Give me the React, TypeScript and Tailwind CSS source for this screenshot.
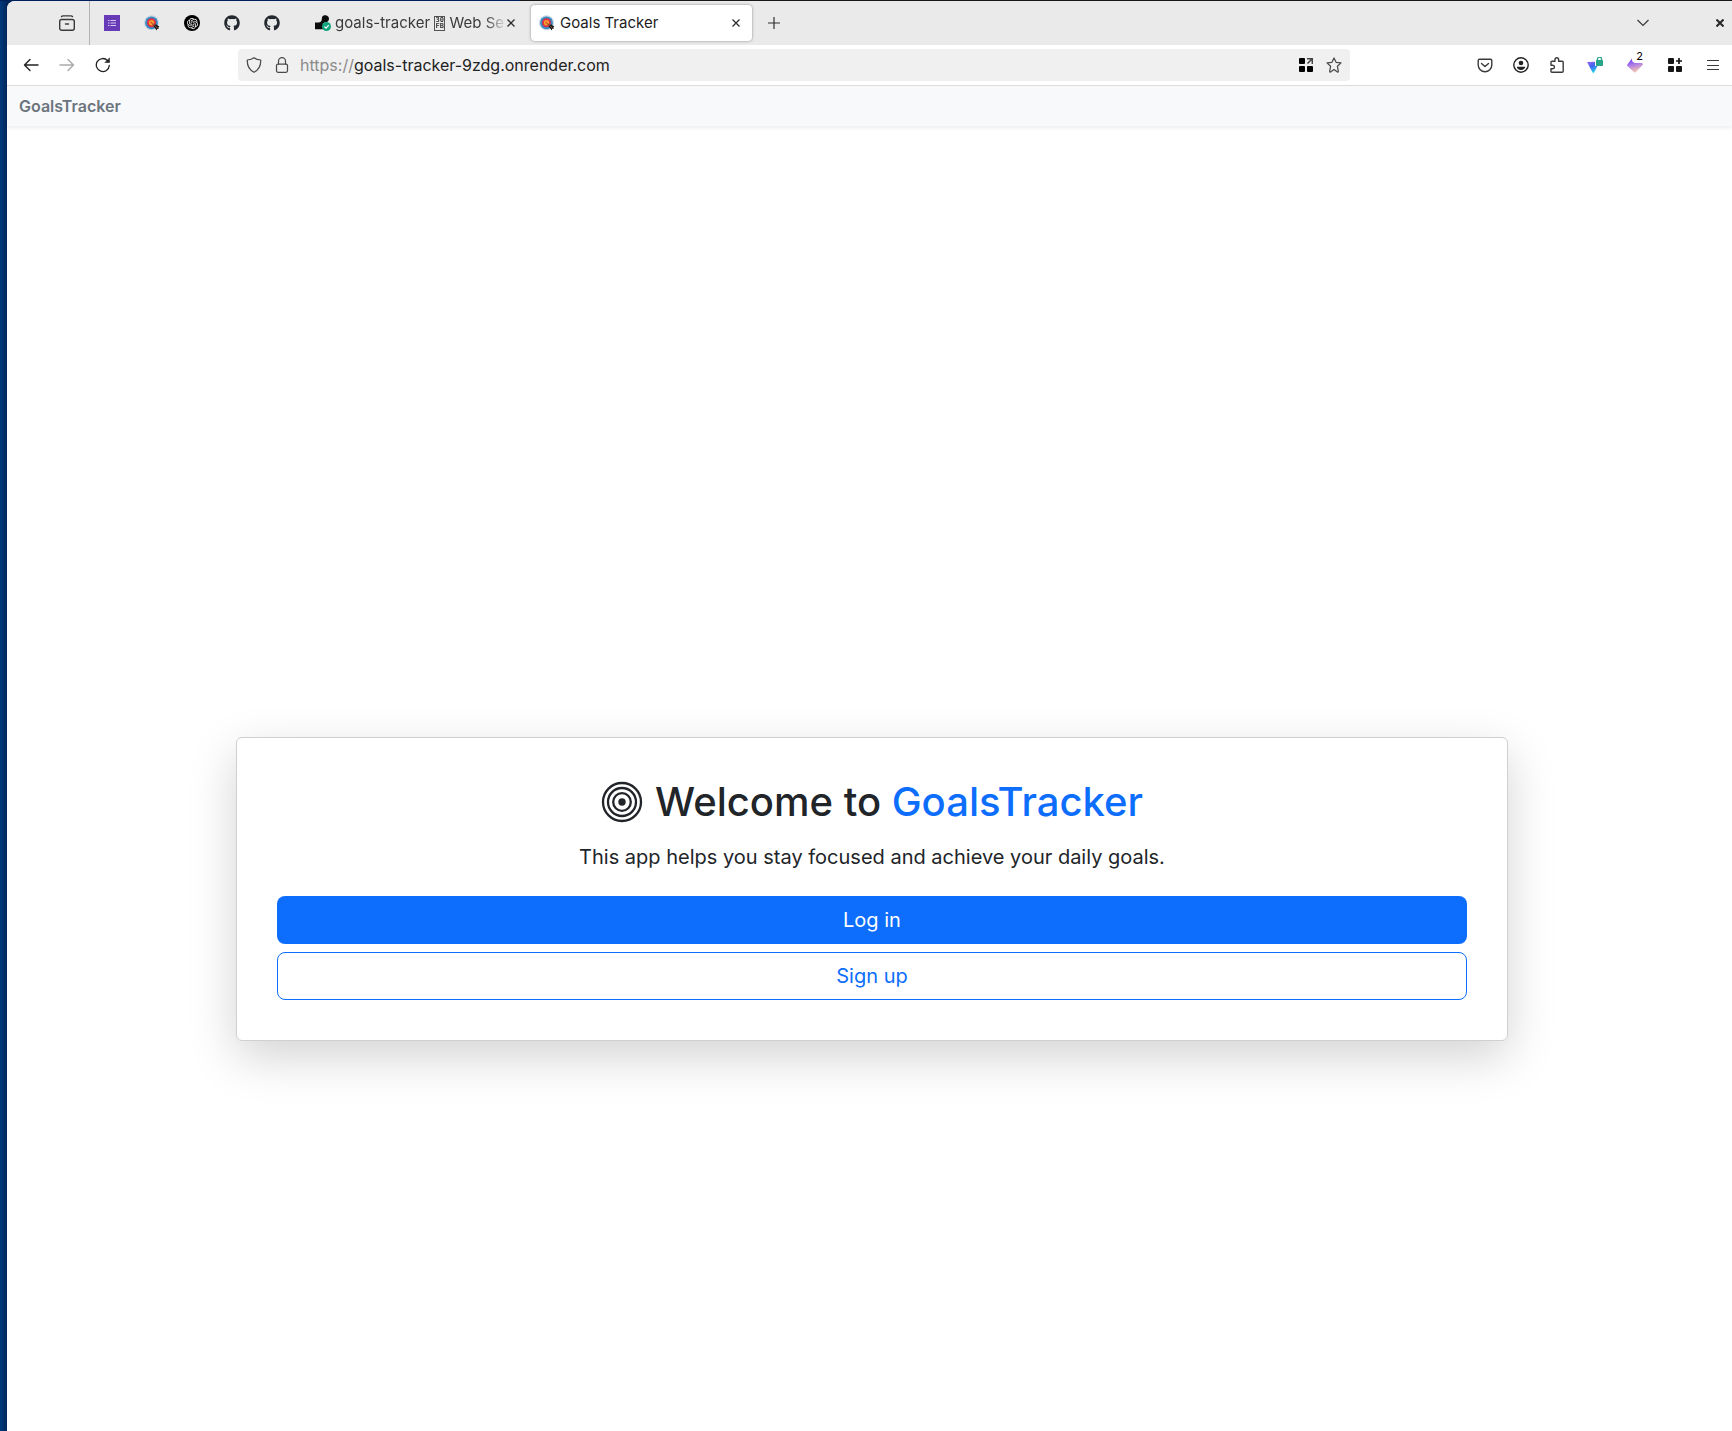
import React from "react";
import { SiOpenai } from "react-icons/si";
import { FaGithub } from "react-icons/fa";

function Stroke({ children, className = "text-[#3a3a3a]", size = 16 }: { children: React.ReactNode; className?: string; size?: number }) {
  return (
    <svg aria-hidden="true" width={size} height={size} viewBox="0 0 16 16" fill="none" stroke="currentColor" strokeWidth="1.25" strokeLinecap="round" strokeLinejoin="round" className={`shrink-0 ${className}`}>
      {children}
    </svg>
  );
}

function TargetFavicon() {
  return (
    <svg aria-hidden="true" width="16" height="16" viewBox="0 0 16 16" className="shrink-0">
      <circle cx="7.5" cy="7.8" r="7.5" fill="#c5d8e3" />
      <circle cx="7.5" cy="7.8" r="6.4" fill="#3b88c3" />
      <circle cx="7.5" cy="7.8" r="4.5" fill="#dd2e44" />
      <circle cx="7.5" cy="7.8" r="2.7" fill="#f9a12e" />
      <circle cx="7.3" cy="7.6" r="1.1" fill="#e4572e" />
      <path d="M8.3 8.6 11 11" stroke="#8a4b2c" strokeWidth="1.4" />
      <path d="M9.6 11.2 12 9.2l3.4 2.6-1.2 1 .6 1.2-1.6-.2-.4 1.8z" fill="#141414" />
      <path d="m11 10.6 2.6 2.8" stroke="#d98a5a" strokeWidth="0.7" />
    </svg>
  );
}

function PinnedTab({ label, children }: { label: string; children: React.ReactNode }) {
  return (
    <button type="button" aria-label={label} className="flex h-9 w-10 items-center justify-center">
      {children}
    </button>
  );
}

function IconButton({ label, width = "w-9", children }: { label: string; width?: string; children: React.ReactNode }) {
  return (
    <button type="button" aria-label={label} className={`relative flex h-8 shrink-0 items-center justify-center ${width}`}>
      {children}
    </button>
  );
}

function CloseIcon() {
  return (
    <svg aria-hidden="true" width="8" height="8" viewBox="0 0 8 8" fill="none" stroke="#2e2e2e" strokeWidth="1.3" className="shrink-0">
      <path d="m.5.5 7 7m0-7-7 7" />
    </svg>
  );
}

function TabStrip() {
  return (
    <div className="flex h-11 items-center bg-[#eaeaea] text-[15px] text-[#3a3a3a]">
      <button type="button" aria-label="Recent browsing" className="flex h-full w-[83px] items-center justify-end border-r border-[#b4b4b4] pr-[14px]">
        <Stroke>
          <path d="M2.5 1.6C2.9 1 3.300.9 4 .9h8c.7 0 1.100.1 1.500.7" strokeWidth="1.400" />
          <rect x=".7" y="4.500" width="14.600" height="10.800" rx="2" strokeWidth="1.400" />
          <path d="M6.500 9h3" strokeWidth="1.400" />
        </Stroke>
      </button>
      <nav aria-label="Pinned tabs" className="ml-0.5 flex">
        <PinnedTab label="Forms">
          <svg aria-hidden="true" width="16" height="16" viewBox="0 0 16 16">
            <path fill="#673ab7" d="M0 0h16v16H0z" />
            <path d="M4 5.500h1.500M4 8h1.500M4 10.500h1.500M6.500 5.500H12M6.500 8H12M6.500 10.500H12" stroke="#d6c8ee" strokeWidth="1" />
          </svg>
        </PinnedTab>
        <PinnedTab label="Goals Tracker"><TargetFavicon /></PinnedTab>
        <PinnedTab label="ChatGPT">
          <span className="flex size-4 items-center justify-center rounded-full bg-black text-white"><SiOpenai size={11} /></span>
        </PinnedTab>
        <PinnedTab label="GitHub"><FaGithub size={16} color="#24292f" /></PinnedTab>
        <PinnedTab label="GitHub repository"><FaGithub size={16} color="#24292f" /></PinnedTab>
      </nav>
      <div className="ml-3.5 flex h-9 w-[221px] items-center pl-[9px]">
        <svg aria-hidden="true" width="16" height="16" viewBox="0 0 16 16" className="shrink-0">
          <path d="M7.500 1.200C8.200.300 9.500 0 10.800.300c2 .300 3.200 1.700 3.200 3.500 0 2.200-1.700 3.800-4 3.800-1 0-1.800.700-1.800 1.600v5H0V7.500h3.500c2.200 0 3.200-1.500 3.300-3.300.100-1.200.200-2.300.700-3z" fill="#0d0d0d" />
          <circle cx="11.500" cy="11.500" r="4.500" fill="#12a67f" />
          <path d="m9.500 11.700 1.500 1.500 2.700-3" fill="none" stroke="#fff" strokeWidth="1.200" />
        </svg>
        <span className="ml-1 flex h-6 w-[172px] shrink-0 items-center whitespace-pre [mask-image:linear-gradient(to_left,transparent,black_22px)]">
          <span>goals-tracker </span>
          <span className="flex h-[15px] w-[11px] shrink-0 flex-col items-center justify-center border border-[#555] font-['DejaVu_Sans_Mono',monospace] text-[7px] leading-[6px] font-bold">
            <span>30</span>
            <span>FB</span>
          </span>
          <span> Web Se</span>
        </span>
        <button type="button" aria-label="Close goals-tracker tab"><CloseIcon /></button>
      </div>
      <div className="ml-1 flex h-9 w-[221px] items-center rounded bg-white pr-3 pl-2 text-[#1c1c1e] shadow-[0_0_3px_rgba(0,0,0,0.4)]">
        <TargetFavicon />
        <span className="ml-[5px] flex-1 whitespace-nowrap">Goals Tracker</span>
        <button type="button" aria-label="Close Goals Tracker tab"><CloseIcon /></button>
      </div>
      <button type="button" aria-label="New tab" className="ml-4 size-3">
        <svg aria-hidden="true" width="12" height="12" viewBox="0 0 12 12" stroke="#2e2e2e" strokeWidth="1.200"><path d="M6 0v12M0 6h12" /></svg>
      </button>
      <button type="button" aria-label="List all tabs" className="ml-auto">
        <svg aria-hidden="true" width="12" height="8" viewBox="0 0 12 8" fill="none" stroke="#3a3a3a" strokeWidth="1.200"><path d="m.500 1 5.500 5.500L11.500 1" /></svg>
      </button>
      <button type="button" aria-label="Close window" className="mr-2 ml-[67px]">
        <svg aria-hidden="true" width="8" height="8" viewBox="0 0 8 8" stroke="#252525" strokeWidth="2"><path d="m.500.500 7 7m0-7-7 7" /></svg>
      </button>
    </div>
  );
}

function Toolbar() {
  return (
    <div className="flex h-[41px] items-center border-b border-[#dcdee0] bg-white">
      <div className="flex w-[231px] shrink-0 pl-1.5">
        <IconButton label="Back"><Stroke className="text-[#222]"><path d="M15 8H1.500M7 2.500 1.500 8 7 13.500" strokeWidth="1.400" /></Stroke></IconButton>
        <IconButton label="Forward"><Stroke className="text-[#aaa]"><path d="M1 8h13.500M9 2.500 14.500 8 9 13.500" strokeWidth="1.400" /></Stroke></IconButton>
        <IconButton label="Reload">
          <Stroke className="text-[#222]">
            <path d="M14.300 8.500A6.500 6.500 0 1 1 12.600 3.600" strokeWidth="1.300" />
            <path d="M14.500 1.200v4.300h-4.300z" fill="currentColor" strokeWidth=".6" />
          </Stroke>
        </IconButton>
      </div>
      <div className="flex h-8 min-w-0 flex-1 items-center rounded bg-[#f0f0f0] pr-2 pl-2 text-base">
        <Stroke className="text-[#4a4a4a]"><path d="M8 .7C6 2.200 4 2.700 1.300 3c-.3 5.500 1.500 9.600 6.700 12.300C13.200 12.600 15 8.500 14.700 3 12 2.700 10 2.200 8 .7z" /></Stroke>
        <span className="ml-3"><Stroke className="text-[#4a4a4a]"><rect x="2.500" y="7" width="11" height="8.300" rx="1.500" /><path d="M4.500 7V4.200a3.500 3.500 0 0 1 7 0V7" /></Stroke></span>
        <label htmlFor="address" className="ml-2.5 text-[#8b8b8b]">https://</label>
        <input id="address" type="text" defaultValue="goals-tracker-9zdg.onrender.com" className="min-w-0 flex-1 bg-transparent text-[#222] outline-none" />
        <button type="button" aria-label="Page apps">
          <svg aria-hidden="true" width="14" height="14" viewBox="0 0 14 14">
            <rect width="6" height="6" rx="1" /><rect y="8" width="6" height="6" rx="1" /><rect x="8" y="8" width="6" height="6" rx="1" />
            <path d="M8 .700h5.300V6M13 1 8.500 5.500" fill="none" stroke="#444" strokeWidth="1.500" />
          </svg>
        </button>
        <button type="button" aria-label="Bookmark this page" className="ml-[13px]">
          <Stroke className="text-[#4a4a4a]"><path d="m8 .900 2.100 4.400 4.900.600-3.600 3.400.900 4.900c0 .700-.4 1-.9.700L8 12.600l-3.400 2.300c-.5.300-.9 0-.9-.7l.9-4.900L1 5.900l4.900-.6z" /></Stroke>
        </button>
      </div>
      <div className="flex shrink-0 pr-px pl-[117px]">
        <IconButton label="Save to Pocket"><Stroke><path d="M2.500 2.200h11c.8 0 1.300.5 1.300 1.300V8A6.800 6.800 0 0 1 1.200 8V3.500c0-.8.5-1.300 1.300-1.300z" strokeWidth="1.400" /><path d="M4.500 6.500 8 9.600l3.500-3.100" strokeWidth="1.400" /></Stroke></IconButton>
        <IconButton label="Account"><Stroke className="text-[#222]"><circle cx="8" cy="8" r="7.200" strokeWidth="1.400" /><circle cx="8" cy="6" r="2.300" fill="currentColor" stroke="none" /><path d="M3.800 9.800h8.400c0 2-1.800 3.200-4.200 3.200s-4.200-1.200-4.200-3.200z" fill="currentColor" stroke="none" /></Stroke></IconButton>
        <IconButton label="Extensions"><Stroke><path d="M6 4.200V2.500a1.800 1.800 0 0 1 3.600 0v1.700h3.600c.6 0 1 .4 1 1v9.100c0 .6-.4 1-1 1H3c-.6 0-1-.4-1-1v-2.500h1.700a1.800 1.800 0 0 0 0-3.600H2V5.200c0-.6.400-1 1-1z" strokeWidth="1.400" /></Stroke></IconButton>
        <IconButton label="VPN" width="w-10">
          <svg aria-hidden="true" width="16" height="16" viewBox="0 0 16 16">
            <defs><linearGradient id="vpn" x1=".2" y1="0" x2=".7" y2="1"><stop offset="0" stopColor="#9068f0" /><stop offset=".45" stopColor="#3f67ee" /><stop offset="1" stopColor="#25e8ee" /></linearGradient></defs>
            <path d="M0 5 8 4.700V9h2.500l-3.300 6.500c-.5.700-1.200.7-1.600 0z" fill="url(#vpn)" />
            <rect x="9" y="3" width="7" height="6" rx=".7" fill="#27a588" />
            <path d="M10.500 3.500V2a2 2 0 0 1 4 0v1.500" fill="none" stroke="#27a588" strokeWidth="1.300" />
          </svg>
        </IconButton>
        <IconButton label="Extension with 2 notifications" width="w-10">
          <svg aria-hidden="true" width="16" height="16" viewBox="0 0 16 16">
            <defs><linearGradient id="gem" x1=".3" y1="0" x2=".6" y2="1"><stop offset="0" stopColor="#6a3cf0" /><stop offset=".35" stopColor="#a070ec" /><stop offset="1" stopColor="#ffd0ae" /></linearGradient></defs>
            <path d="M5 1.500 6 5h8.500L16 7.500 9 15c-.7.700-1.500.7-2.200 0L.5 9c-.6-.6-.6-1.200 0-1.800z" fill="url(#gem)" />
          </svg>
          <span className="absolute top-0 right-2 rounded-sm bg-white px-1 text-[11px] leading-[14px] text-black">2</span>
        </IconButton>
        <IconButton label="Add app" width="w-10">
          <svg aria-hidden="true" width="14" height="14" viewBox="0 0 14 14" fill="#151515"><rect width="6" height="6" rx="1" /><rect y="8" width="6" height="6" rx="1" /><rect x="8" y="8" width="6" height="6" rx="1" /><path d="M11 0v6M8 3h6" stroke="#151515" strokeWidth="1.700" /></svg>
        </IconButton>
        <IconButton label="Open application menu">
          <svg aria-hidden="true" width="12" height="12" viewBox="0 0 12 12" stroke="#3a3a3a" strokeWidth="1"><path d="M0 1.500h12M0 6.500h12M0 10.500h12" /></svg>
        </IconButton>
      </div>
    </div>
  );
}

function Welcome() {
  return (
    <section className="ml-[5px] w-full max-w-[1272px] self-center rounded-md border border-[#d0d0d0] bg-white p-10 text-center text-[#212529] shadow-[0_16px_48px_rgba(0,0,0,0.175)]">
      <h1 className="mb-4 flex items-center justify-center gap-3 text-[40px] leading-12 font-medium">
        <svg aria-hidden="true" width="42" height="42" viewBox="0 0 42 42" fill="none" stroke="currentColor" strokeWidth="2.300">
          <circle cx="21" cy="21" r="19" /><circle cx="21" cy="21" r="14" /><circle cx="21" cy="21" r="8.800" /><circle cx="21" cy="21" r="3.700" fill="currentColor" stroke="none" />
        </svg>
        <span>Welcome to <span className="text-[#0d6efd]">GoalsTracker</span></span>
      </h1>
      <p className="mb-6 text-xl leading-[30px]">This app helps you stay focused and achieve your daily goals.</p>
      <div className="grid gap-2 text-xl">
        <a href="#login" className="flex h-12 items-center justify-center rounded-lg bg-[#0d6efd] text-white">Log in</a>
        <a href="#signup" className="flex h-12 items-center justify-center rounded-lg border border-[#0d6efd] text-[#0d6efd]">Sign up</a>
      </div>
    </section>
  );
}

export default function App() {
  return (
    <div className="min-h-screen bg-linear-to-r from-[#003a7c] from-0% to-[#00265a] to-[7px] font-[Inter,sans-serif]">
      <div className="h-px bg-linear-to-r from-[#001f5a] from-30% to-[#1a1518] to-30%" />
      <div className="ml-[7px] flex min-h-[calc(100vh-1px)] flex-col overflow-hidden rounded-tl-lg bg-white">
        <TabStrip />
        <Toolbar />
        <header className="flex h-10 items-center bg-[#f8f9fb] px-3 shadow-[0_2px_4px_rgba(0,0,0,0.075)]">
          <a href="#home" className="text-base font-semibold text-[#6c757d]">GoalsTracker</a>
        </header>
        <main className="flex flex-1 flex-col">
          <div className="grow-[61]" />
          <Welcome />
          <div className="grow-[39]" />
        </main>
      </div>
    </div>
  );
}
